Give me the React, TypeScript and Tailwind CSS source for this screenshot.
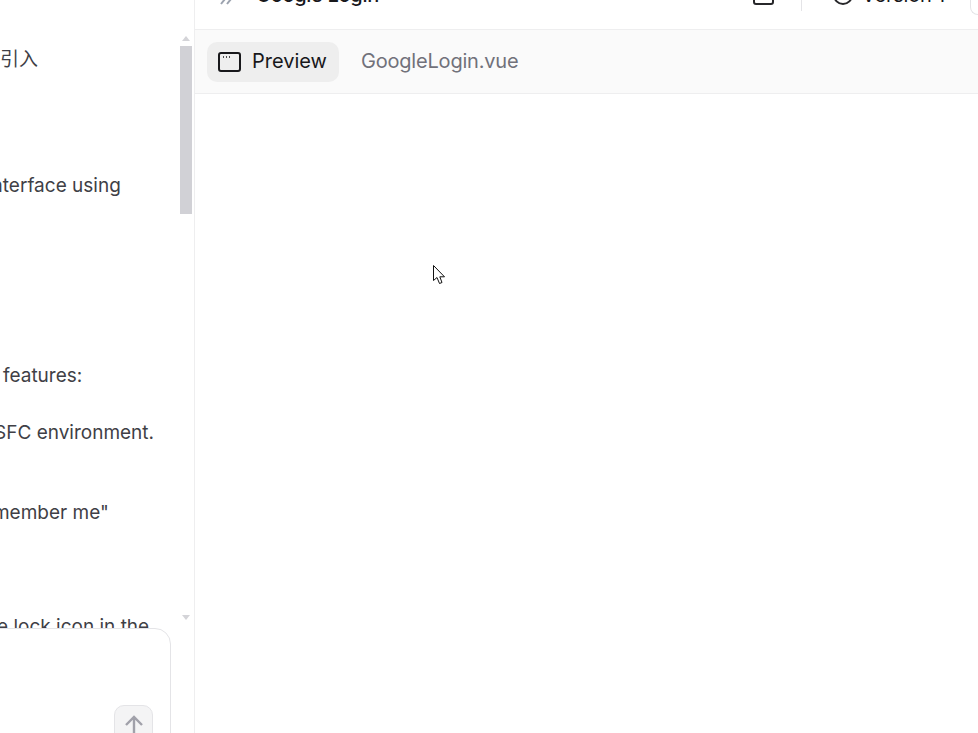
const lines = [
  { top: "mt-[47px]", left: "ml-[0px]", text: "引入" },
  { top: "mt-[101px]", left: "ml-[-13px]", text: "interface using" },
  { top: "mt-[165px]", left: "ml-[3px]", text: "features:" },
  { top: "mt-[32px]", left: "ml-[-6px]", text: "SFC environment." },
  { top: "mt-[55px]", left: "ml-[-25px]", text: "remember me\"" },
  { top: "mt-[89px]", left: "ml-[-3px]", text: "e lock icon in the" },
];

const App = () => {
  return (
    <div className="relative flex h-[733px] w-[978px] overflow-hidden bg-white font-['Inter','Noto_Sans_CJK_SC',sans-serif]">
      <div className="relative flex h-full w-[195px] shrink-0 border-r border-[#eeeeef]">
        <div className="h-[629px] w-[180px] shrink-0 overflow-hidden text-[19px] leading-[25px] text-[#3f3f46]">
          {lines.map((line) => (
            <p key={line.text} className={`whitespace-nowrap ${line.top} ${line.left}`}>
              {line.text}
            </p>
          ))}
        </div>
        <div className="flex h-[629px] w-[12px] shrink-0 flex-col items-center">
          <div className="mt-[36px] h-0 w-0 border-x-[4px] border-b-[5px] border-x-transparent border-b-[#d4d4d8]" />
          <div className="mt-[5px] h-[168px] w-full bg-[#d1d1d6]" />
          <div className="mt-[401px] h-0 w-0 border-x-[4px] border-t-[5px] border-x-transparent border-t-[#d4d4d8]" />
        </div>
        <div className="absolute left-[-30px] top-[628px] h-[140px] w-[201px] rounded-[16px] border border-[#e4e4e7] bg-white">
          <div className="absolute left-[143px] top-[76px] flex h-[40px] w-[39px] items-start justify-center rounded-[10px] border border-[#e4e4e7] bg-[#f4f4f5] pt-[9px]">
            <svg width="20" height="24" viewBox="0 0 20 24" fill="none" stroke="#a1a1aa" strokeWidth="2.4">
              <path d="M10 24V2M2 10l8-8 8 8" />
            </svg>
          </div>
        </div>
      </div>

      <div className="flex min-w-0 flex-1 flex-col">
        <div className="flex h-[30px] shrink-0 items-end border-b border-[#eeeeef] pb-[20px]">
          <svg className="ml-[23px] mb-[3px] shrink-0" width="16" height="12" viewBox="0 0 16 12" fill="none" stroke="#9ca3af" strokeWidth="2">
            <path d="M3 0l4 5-4 5M9 0l4 5-4 5" />
          </svg>
          <span className="ml-[22px] whitespace-nowrap text-[20px] font-medium leading-[28px] tracking-[-0.3px] text-[#18181b]">Google Login</span>
          <div className="ml-auto flex items-end">
            <div className="mb-[4px] h-[24px] w-[21px] rounded-[3px] border-2 border-[#27272a]" />
            <div className="ml-[27px] mb-[-2px] h-[20px] w-px bg-[#e4e4e7]" />
            <div className="ml-[31px] mb-[4px] h-[20px] w-[20px] rounded-full border-2 border-[#27272a]" />
            <span className="ml-[9px] whitespace-nowrap text-[20px] leading-[28px] tracking-[-0.2px] text-[#18181b]">Version 1</span>
            <div className="ml-[25px] mb-[-6px] h-[25px] w-[8px] rounded-bl-[8px] border-b border-l border-[#e4e4e7]" />
          </div>
        </div>

        <div className="flex h-[64px] shrink-0 items-center gap-[10px] border-b border-[#eeeeef] bg-[#fafafa] pl-[12px]">
          <div className="flex h-[40px] items-center gap-[11px] rounded-[10px] bg-[#eeeeee] pl-[11px] pr-[12px]">
            <svg width="23" height="20" viewBox="0 0 23 20" fill="none">
              <rect x="1" y="1" width="21" height="18" rx="2" stroke="#18181b" strokeWidth="2" />
              <path d="M5 5h1M8 5h1M11 5h1" stroke="#18181b" strokeWidth="1.5" />
            </svg>
            <span className="pb-[1px] text-[20px] leading-[28px] text-[#18181b]">Preview</span>
          </div>
          <div className="flex h-[40px] items-center px-[12px]">
            <span className="pb-[1px] text-[20px] leading-[28px] tracking-[-0.2px] text-[#71717a]">GoogleLogin.vue</span>
          </div>
        </div>
        <div className="flex-1 bg-white" />
      </div>

      <svg className="absolute left-[433px] top-[265px]" width="13" height="20" viewBox="0 0 13 20" fill="#ffffff" stroke="#111111" strokeWidth="1">
        <path d="M0.5 0.5V15.5L4 12.5L6.5 18.5L9 17.5L6.8 11.8H11.5Z" />
      </svg>
    </div>
  );
};

export default App;
